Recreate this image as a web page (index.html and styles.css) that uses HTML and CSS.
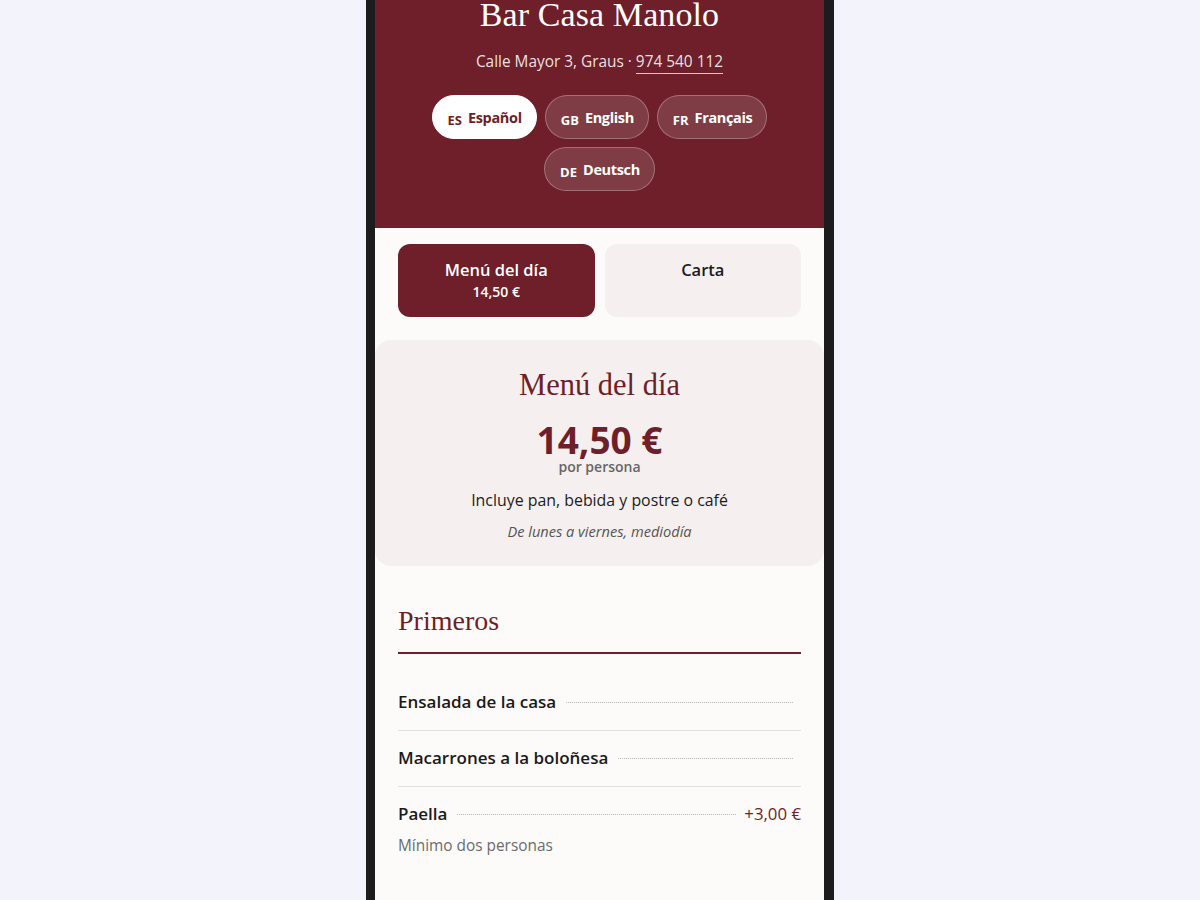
FILE: index.html
```html
<!DOCTYPE html>
<html lang="es">
<head>
<meta charset="utf-8">
<title>Bar Casa Manolo</title>
<link rel="stylesheet" href="styles.css">
</head>
<body>
<div class="frame">
  <div class="screen">
    <header class="header">
      <h1 class="title">Bar Casa Manolo</h1>
      <p class="address">Calle Mayor 3, Graus · <a class="phone" href="#">974 540 112</a></p>
      <div class="langs">
        <button class="lang active"><span class="code">ES</span><span class="name">Español</span></button>
        <button class="lang"><span class="code">GB</span><span class="name">English</span></button>
        <button class="lang"><span class="code">FR</span><span class="name">Français</span></button>
        <button class="lang"><span class="code">DE</span><span class="name">Deutsch</span></button>
      </div>
    </header>

    <nav class="tabs">
      <button class="tab active"><span class="tab-label">Menú del día</span><span class="tab-price">14,50 €</span></button>
      <button class="tab"><span class="tab-label">Carta</span></button>
    </nav>

    <section class="menu-card">
      <h2 class="menu-title">Menú del día</h2>
      <div class="menu-price">14,50 €</div>
      <div class="menu-per">por persona</div>
      <p class="menu-includes">Incluye pan, bebida y postre o café</p>
      <p class="menu-when">De lunes a viernes, mediodía</p>
    </section>

    <section class="course">
      <h3 class="course-title">Primeros</h3>
      <ul class="items">
        <li class="item">
          <div class="item-row"><span class="item-name">Ensalada de la casa</span><span class="leader"></span><span class="item-price"></span></div>
        </li>
        <li class="item">
          <div class="item-row"><span class="item-name">Macarrones a la boloñesa</span><span class="leader"></span><span class="item-price"></span></div>
        </li>
        <li class="item">
          <div class="item-row"><span class="item-name">Paella</span><span class="leader"></span><span class="item-price">+3,00 €</span></div>
          <div class="item-desc">Mínimo dos personas</div>
        </li>
      </ul>
    </section>
  </div>
</div>
</body>
</html>
```

FILE: styles.css
```css
* { box-sizing: border-box; }

html, body {
  margin: 0;
  padding: 0;
  height: 100%;
}

body {
  background: #f3f3fc;
  font-family: "Open Sans", "Noto Sans", sans-serif;
  color: #1c1c1c;
  overflow: hidden;
}

.frame {
  width: 468px;
  height: 900px;
  margin: 0 auto;
  border-left: 9px solid #1c1c1c;
  border-right: 10px solid #1c1c1c;
  background: #fdfbfa;
  overflow: hidden;
}

.screen {
  display: flex;
  flex-direction: column;
}

/* Header */
.header {
  background: #6e1f2a;
  color: #fff;
  text-align: center;
  padding: 0 20px 37px;
  display: flex;
  flex-direction: column;
  align-items: center;
}

.title {
  margin: 0;
  font-family: "Liberation Serif", "DejaVu Serif", serif;
  font-weight: 400;
  font-size: 34px;
  line-height: 30px;
  letter-spacing: 0.1px;
}

.address {
  margin: 21px 0 0;
  font-size: 15.4px;
  line-height: 22px;
  color: rgba(255, 255, 255, 0.88);
}

.phone {
  color: inherit;
  text-decoration: none;
  border-bottom: 1px solid rgba(255, 255, 255, 0.75);
  padding-bottom: 1px;
}

.langs {
  margin-top: 22px;
  display: flex;
  flex-wrap: wrap;
  justify-content: center;
  gap: 8px 8px;
  max-width: 360px;
}

.lang {
  height: 44px;
  border-radius: 22px;
  border: 1px solid rgba(255, 255, 255, 0.28);
  background: rgba(255, 255, 255, 0.13);
  color: #fff;
  font-family: inherit;
  display: flex;
  align-items: center;
  gap: 6px;
  padding: 0 14px 0 15px;
}

.lang.active {
  background: #fff;
  border-color: #fff;
  color: #6e1f2a;
}

.code {
  font-size: 13px;
  font-weight: 700;
  position: relative;
  top: 3px;
}

.name {
  font-size: 14.5px;
  font-weight: 700;
  letter-spacing: -0.35px;
}

/* Tabs */
.tabs {
  display: grid;
  grid-template-columns: 1fr 1fr;
  gap: 10px;
  padding: 16px 23px 0;
}

.tab {
  border: none;
  border-radius: 12px;
  background: #f5efef;
  color: #1c1c1c;
  font-family: inherit;
  display: flex;
  flex-direction: column;
  align-items: center;
  justify-content: flex-start;
  padding: 14px 12px 15px;
  height: 73px;
}

.tab.active {
  background: #6e1f2a;
  color: #fff;
}

.tab-label {
  font-size: 16.5px;
  font-weight: 600;
  line-height: 24px;
}

.tab-price {
  font-size: 14px;
  font-weight: 600;
  line-height: 20px;
}

/* Menu card */
.menu-card {
  margin-top: 23px;
  background: #f5efef;
  border-radius: 16px;
  text-align: center;
  padding: 27px 20px 25px;
}

.menu-title {
  margin: 0;
  font-family: "Liberation Serif", "DejaVu Serif", serif;
  font-weight: 400;
  font-size: 30.5px;
  line-height: 36px;
  color: #6e1f2a;
}

.menu-price {
  margin-top: 18px;
  font-size: 37px;
  font-weight: 700;
  line-height: 38px;
  color: #6e1f2a;
}

.menu-per {
  margin-top: 0;
  font-size: 14px;
  font-weight: 600;
  line-height: 15px;
  color: #666;
}

.menu-includes {
  margin: 14px 0 0;
  font-size: 15.9px;
  line-height: 24px;
  color: #1c1c1c;
}

.menu-when {
  margin: 9px 0 0;
  font-size: 14.6px;
  line-height: 20px;
  font-style: italic;
  color: #555;
}

/* Course */
.course {
  padding: 38px 23px 0;
}

.course-title {
  margin: 0 0 21px;
  font-family: "Liberation Serif", "DejaVu Serif", serif;
  font-weight: 400;
  font-size: 28px;
  line-height: 34px;
  color: #6e1f2a;
  padding-bottom: 14px;
  border-bottom: 2px solid #6e1f2a;
}

.items {
  list-style: none;
  margin: 0;
  padding: 0;
}

.item {
  padding: 15px 0 16px;
  border-bottom: 1px solid #e4dfdf;
}

.item:last-child {
  border-bottom: none;
}

.item-row {
  display: flex;
  align-items: baseline;
}

.item-name {
  font-size: 17px;
  font-weight: 600;
  line-height: 24px;
  color: #1a1a1a;
}

.leader {
  flex: 1;
  margin: 0 8px 0 10px;
  border-bottom: 1px dotted #bdb8b8;
  transform: translateY(-5px);
}

.item-price {
  font-size: 16.8px;
  line-height: 24px;
  color: #6e1f2a;
}

.item-desc {
  margin-top: 9px;
  font-size: 15.4px;
  line-height: 22px;
  color: #6b6b6b;
}
```
